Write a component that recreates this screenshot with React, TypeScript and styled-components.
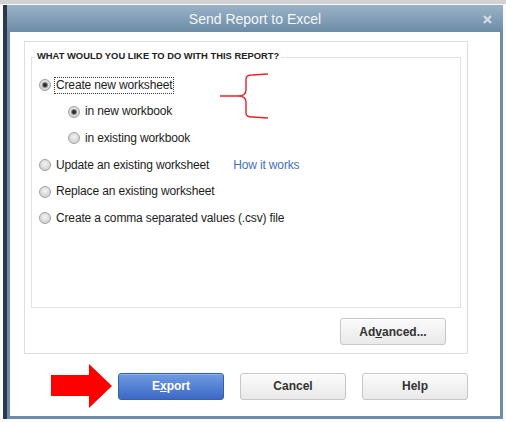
import styled, { createGlobalStyle } from "styled-components";

const GlobalStyle = createGlobalStyle`
    * { box-sizing: border-box; }
    body {
        margin: 0;
        font-family: "Liberation Sans", Arial, sans-serif;
        color: #1c1c1c;
    }
`;

const Page = styled.div`
    height: 422px;
    padding: 5px 0 0 7px;
    background: linear-gradient(#d2d2d2 0, #d2d2d2 4px, #fbfbfb 4px);
    overflow: hidden;
`;

const Window = styled.div`
    width: 496px;
    height: 414px;
    display: flex;
    flex-direction: column;
    border: 3px solid #6f8ba5;
    border-top: none;
    box-shadow: -4px 0 0 #2c3949;
    background: #fff;
`;

const TitleBar = styled.div`
    height: 27px;
    margin: 0 -3px;
    display: flex;
    align-items: center;
    justify-content: center;
    position: relative;
    background: linear-gradient(#9ab2c7, #6c8ca7);
    color: #f4f7fa;
    font-size: 14px;
`;

const CloseButton = styled.span`
    position: absolute;
    right: 11px;
    top: 10px;
    display: flex;
`;

const Content = styled.div`
    flex: 1;
    padding: 9px 0 0 14px;
`;

const OptionsBox = styled.div`
    width: 444px;
    height: 313px;
    border: 1px solid #dedede;
    padding: 8px 6px 0 6px;
    display: flex;
    flex-direction: column;
`;

const Group = styled.fieldset`
    position: relative;
    margin: 0;
    height: 258px;
    border: 1px solid #e2e2e2;
    padding: 7px 0 0 7px;
    display: flex;
    flex-direction: column;
`;

const Legend = styled.legend`
    margin-left: -4px;
    padding: 0 2px 4px;
    font-size: 9.4px;
    font-weight: bold;
    line-height: 11px;
    color: #222;
`;

const OptionRow = styled.label<{ indent?: boolean }>`
    height: 26.6px;
    display: flex;
    align-items: center;
    gap: 3px;
    padding-left: ${({ indent }) => (indent ? "29px" : "0")};
    font-size: 12px;
    letter-spacing: -0.15px;
`;

const Radio = styled.span<{ checked?: boolean }>`
    width: 12px;
    height: 12px;
    flex: none;
    border-radius: 50%;
    border: 1px solid #a2a2a2;
    background: radial-gradient(circle at 50% 40%, #f4f4f4 0, #cfcfcf 80%);
    display: flex;
    align-items: center;
    justify-content: center;
    &::after {
        content: "";
        display: ${({ checked }) => (checked ? "block" : "none")};
        width: 4px;
        height: 4px;
        border-radius: 50%;
        background: #2e2e2e;
        box-shadow: 0 0 0 1px #8a8a8a;
    }
`;

const Caption = styled.span<{ focused?: boolean }>`
    line-height: 15px;
    padding: 0 1px;
    border: 1px ${({ focused }) => (focused ? "dotted #3a3a3a" : "solid transparent")};
`;

const HelpLink = styled.a`
    margin-left: 19px;
    color: #3f6fc4;
    text-decoration: none;
    cursor: pointer;
`;

const Brace = styled.svg`
    position: absolute;
    left: 188px;
    top: 8px;
`;

const AdvancedRow = styled.div`
    display: flex;
    justify-content: flex-end;
    padding: 10px 15px 0 0;
`;

const Button = styled.button<{ primary?: boolean }>`
    width: 106px;
    height: 27px;
    border-radius: 3px;
    font-family: inherit;
    font-size: 12px;
    font-weight: bold;
    border: 1px solid ${({ primary }) => (primary ? "#3460b0" : "#c6c6c6")};
    color: ${({ primary }) => (primary ? "#fff" : "#333")};
    background: ${({ primary }) =>
        primary ? "linear-gradient(#6f9be0, #3d69c7)" : "linear-gradient(#fbfbfb, #e9e9e9)"};
    box-shadow: inset 0 1px 0 ${({ primary }) => (primary ? "#8fb3ec" : "#fff")};
    u { text-decoration: underline; }
`;

const Footer = styled.div`
    display: flex;
    align-items: center;
    padding: 10px 0 0 27px;
    gap: 16px;
`;

const Arrow = styled.svg`
    margin-right: -11px;
    flex: none;
`;

const App = () => {
    return (
        <>
            <GlobalStyle />
            <Page>
                <Window>
                    <TitleBar>
                        Send Report to Excel
                        <CloseButton>
                            <svg width="9" height="9" viewBox="0 0 9 9">
                                <path d="M1 1 L8 8 M8 1 L1 8" stroke="#d3dbe3" strokeWidth="2.4" />
                            </svg>
                        </CloseButton>
                    </TitleBar>
                    <Content>
                        <OptionsBox>
                            <Group>
                                <Legend>WHAT WOULD YOU LIKE TO DO WITH THIS REPORT?</Legend>
                                <OptionRow>
                                    <Radio checked />
                                    <Caption focused>Create new worksheet</Caption>
                                </OptionRow>
                                <OptionRow indent>
                                    <Radio checked />
                                    <Caption>in new workbook</Caption>
                                </OptionRow>
                                <OptionRow indent>
                                    <Radio />
                                    <Caption>in existing workbook</Caption>
                                </OptionRow>
                                <OptionRow>
                                    <Radio />
                                    <Caption>Update an existing worksheet</Caption>
                                    <HelpLink>How it works</HelpLink>
                                </OptionRow>
                                <OptionRow>
                                    <Radio />
                                    <Caption>Replace an existing worksheet</Caption>
                                </OptionRow>
                                <OptionRow>
                                    <Radio />
                                    <Caption>Create a comma separated values (.csv) file</Caption>
                                </OptionRow>
                                <Brace width="50" height="46" viewBox="0 0 50 46">
                                    <path
                                        d="M0 23 L18 23 Q26 23 26 17 L26 6 Q26 2 32 2 L48 1 M18 23 Q26 23 26 29 L26 40 Q26 44 32 44 L48 45"
                                        fill="none"
                                        stroke="#e8232b"
                                        strokeWidth="1.4"
                                    />
                                </Brace>
                            </Group>
                            <AdvancedRow>
                                <Button>Ad<u>v</u>anced...</Button>
                            </AdvancedRow>
                        </OptionsBox>
                        <Footer>
                            <Arrow width="62" height="44" viewBox="0 0 62 44">
                                <path d="M0 11 L38 11 L38 0 L61 22 L38 44 L38 32 L0 32 Z" fill="#ff0000" />
                            </Arrow>
                            <Button primary>E<u>x</u>port</Button>
                            <Button>Cancel</Button>
                            <Button>Help</Button>
                        </Footer>
                    </Content>
                </Window>
            </Page>
        </>
    );
};

export default App;
